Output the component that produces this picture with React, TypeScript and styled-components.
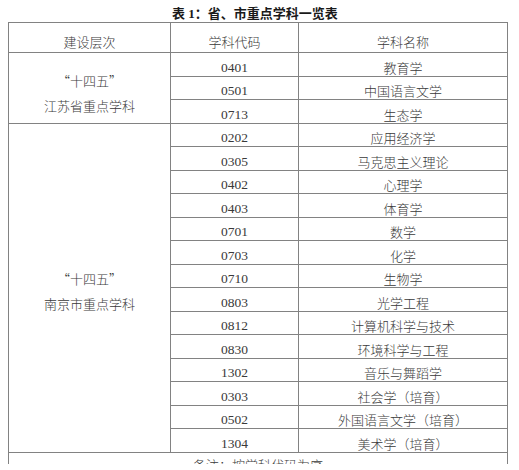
import React from "react";
import styled, { createGlobalStyle } from "styled-components";

const Global = createGlobalStyle`
  html, body { margin: 0; padding: 0; background: #fff; }
  body { font-family: "Noto Sans CJK SC", "Liberation Serif", sans-serif; }
`;

const Page = styled.div`
  width: 519px;
  height: 464px;
  overflow: hidden;
  background: #fff;
`;

const Title = styled.div`
  height: 22px;
  padding-left: 172px;
  box-sizing: border-box;
  font-family: "Liberation Serif", "Noto Sans CJK SC", serif;
  font-weight: 700;
  font-size: 13px;
  line-height: 25px;
  color: #1a1a1a;
  white-space: nowrap;
  & > span { font-family: "Noto Sans CJK SC", sans-serif; }
`;

const Table = styled.table`
  margin-left: 8px;
  width: 499px;
  border-collapse: collapse;
  table-layout: fixed;
`;

const Cell = styled.td<{ $num?: boolean; $h?: number }>`
  border: 1px solid #828282;
  padding: 0;
  height: ${(p) => p.$h ?? 23.5}px;
  box-sizing: border-box;
  text-align: center;
  vertical-align: bottom;
  font-family: ${(p) =>
    p.$num ? `"Liberation Serif", serif` : `"Noto Sans CJK SC", sans-serif`};
  font-size: ${(p) => (p.$num ? 13.5 : 13)}px;
  font-weight: ${(p) => (p.$num ? 400 : 300)};
  line-height: 16px;
  color: ${(p) => (p.$num ? "#3a3a3a" : "#3a3a3a")};
  white-space: nowrap;
`;

const HeadCell = styled(Cell)`
  padding-bottom: 2px;
`;

const GroupCell = styled.td<{ $shift: number }>`
  border: 1px solid #828282;
  padding: ${(p) => p.$shift}px 0 0;
  text-align: center;
  vertical-align: middle;
  font-family: "Noto Sans CJK SC", sans-serif;
  font-size: 13px;
  font-weight: 300;
  line-height: 25px;
  color: #3a3a3a;
`;

const NoteCell = styled.td`
  border-left: 1px solid #828282;
  border-right: 1px solid #828282;
  border-top: 1px solid #828282;
  padding: 4px 0 0;
  height: 24px;
  vertical-align: top;
  text-align: center;
  font-family: "Noto Sans CJK SC", sans-serif;
  font-size: 13px;
  font-weight: 300;
  line-height: 16px;
  color: #3a3a3a;
`;

type Row = [string, string];

const groups: { label: string[]; shift: number; rows: Row[] }[] = [
  {
    label: ["“十四五”", "江苏省重点学科"],
    shift: 10,
    rows: [
      ["0401", "教育学"],
      ["0501", "中国语言文学"],
      ["0713", "生态学"],
    ],
  },
  {
    label: ["“十四五”", "南京市重点学科"],
    shift: 6,
    rows: [
      ["0202", "应用经济学"],
      ["0305", "马克思主义理论"],
      ["0402", "心理学"],
      ["0403", "体育学"],
      ["0701", "数学"],
      ["0703", "化学"],
      ["0710", "生物学"],
      ["0803", "光学工程"],
      ["0812", "计算机科学与技术"],
      ["0830", "环境科学与工程"],
      ["1302", "音乐与舞蹈学"],
      ["0303", "社会学（培育）"],
      ["0502", "外国语言文学（培育）"],
      ["1304", "美术学（培育）"],
    ],
  },
];

export default function App() {
  return (
    <>
      <Global />
      <Page>
        <Title>
          表 1<span>：省、市重点学科一览表</span>
        </Title>
        <Table>
          <colgroup>
            <col style={{ width: 162 }} />
            <col style={{ width: 128 }} />
            <col style={{ width: 209 }} />
          </colgroup>
          <tbody>
            <tr>
              <HeadCell $h={30}>建设层次</HeadCell>
              <HeadCell $h={30}>学科代码</HeadCell>
              <HeadCell $h={30}>学科名称</HeadCell>
            </tr>
            {groups.map((g) =>
              g.rows.map((r, i) => (
                <tr key={r[0]}>
                  {i === 0 && (
                    <GroupCell rowSpan={g.rows.length} $shift={g.shift}>
                      {g.label.map((l) => (
                        <div key={l}>{l}</div>
                      ))}
                    </GroupCell>
                  )}
                  <Cell $num>{r[0]}</Cell>
                  <Cell>{r[1]}</Cell>
                </tr>
              ))
            )}
            <tr>
              <NoteCell colSpan={3}>备注：按学科代码为序</NoteCell>
            </tr>
          </tbody>
        </Table>
      </Page>
    </>
  );
}
